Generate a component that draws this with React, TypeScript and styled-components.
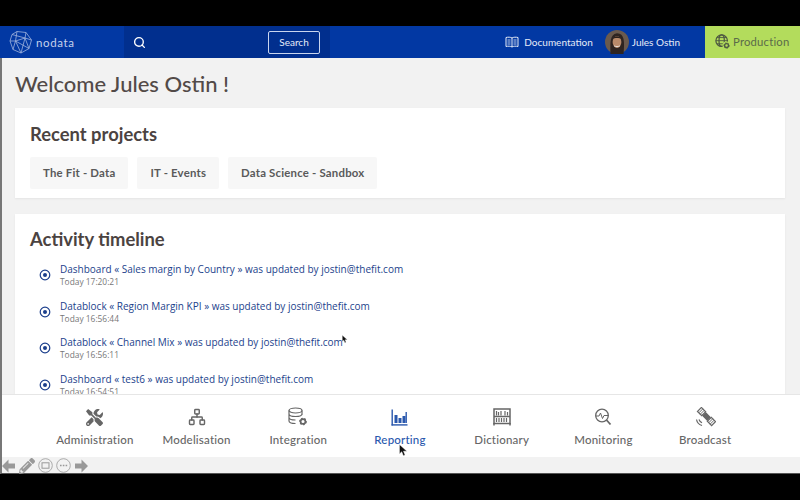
import React from "react";
import styled, { createGlobalStyle } from "styled-components";
import { Search, Network } from "lucide-react";
import { FaTools, FaPencilAlt } from "react-icons/fa";

const Global = createGlobalStyle`
  html, body { margin: 0; padding: 0; background: #000; }
  * { box-sizing: border-box; }
`;

const Frame = styled.div`
  position: relative;
  width: 800px;
  height: 500px;
  padding: 26px 0;
  background: #000;
  overflow: hidden;
  font-family: "Lato", "Noto Sans", sans-serif;
`;
const Screen = styled.div`
  height: 448px;
  display: flex;
  flex-direction: column;
  background: #f2f2f2;
  border-left: 2px solid #777;
`;
const Nav = styled.header`
  height: 32px;
  margin-left: -2px;
  flex: none;
  display: flex;
  align-items: stretch;
  background: #0238a3;
  color: #e6ecf8;
`;
const Brand = styled.div`
  width: 124px;
  display: flex;
  align-items: center;
  gap: 3px;
  padding-left: 9px;
  font-size: 11.5px;
  letter-spacing: 0.6px;
  color: #c5d2ec;
`;
const SearchZone = styled.div`
  width: 206px;
  display: flex;
  align-items: center;
  justify-content: space-between;
  padding: 0 10px 0 9px;
  background: #012f8e;
`;
const SearchButton = styled.div`
  width: 52px;
  height: 23px;
  display: flex;
  align-items: center;
  justify-content: center;
  border: 1px solid #c9d5ee;
  border-radius: 2px;
  font-size: 10px;
  color: #e6ecf8;
`;
const NavRight = styled.div`
  flex: 1;
  display: flex;
  align-items: center;
  justify-content: flex-end;
  padding-right: 25px;
  font-size: 10px;
`;
const NavLink = styled.span`
  display: flex;
  align-items: center;
  gap: 5px;
`;
const Avatar = styled.svg`
  width: 24px;
  height: 24px;
  margin: 0 3px 0 12px;
`;
const Env = styled.div`
  width: 95px;
  display: flex;
  align-items: center;
  gap: 2px;
  padding: 0 0 1px 10px;
  background: #b3dc5c;
  color: #5b6b4a;
  font-size: 11.3px;
  letter-spacing: 0.2px;
`;
const Main = styled.main`
  flex: 1;
  min-height: 0;
  overflow: hidden;
  padding: 0 15px 0 13px;
`;
const Welcome = styled.h1`
  margin: 0;
  height: 50px;
  display: flex;
  align-items: center;
  font-size: 22px;
  font-weight: 500;
  color: #524a48;
`;
const Card = styled.section`
  background: #fff;
  padding: 15px 15px 9px;
  margin-bottom: 16px;
  box-shadow: 0 1px 2px rgba(0, 0, 0, 0.06);
`;
const CardTitle = styled.h2`
  margin: 0 0 12px;
  font-size: 18.4px;
  line-height: 22px;
  font-weight: 700;
  color: #4b4341;
`;
const Chips = styled.div`
  display: flex;
  gap: 9px;
`;
const Chip = styled.div`
  height: 32px;
  padding: 0 13px 1px;
  display: flex;
  align-items: center;
  background: #f7f7f7;
  border-radius: 2px;
  font-size: 11.4px;
  font-weight: 700;
  letter-spacing: 0.2px;
  color: #5a5a5a;
`;
const Timeline = styled(Card)`
  padding-top: 14px;
  margin: 0;
  height: 400px;
`;
const TimelineTitle = styled(CardTitle)`
  margin-bottom: 7px;
`;
const Entry = styled.div`
  height: 36.6px;
  display: flex;
  align-items: center;
  gap: 9px;
  padding-left: 9px;
  font-family: "Open Sans", sans-serif;
`;
const Link = styled.div`
  font-size: 10px;
  line-height: 14px;
  color: #1c3f8c;
`;
const Time = styled.div`
  font-size: 8.4px;
  line-height: 12px;
  color: #777;
`;
const Dock = styled.nav`
  height: 63px;
  flex: none;
  display: grid;
  grid-template-columns: repeat(7, 1fr);
  padding: 0 44px 0 42px;
  background: #fff;
  border-top: 1px solid #e6e6e6;
`;
const DockItem = styled.div<{ $active?: boolean }>`
  display: flex;
  flex-direction: column;
  align-items: center;
  padding-top: 13px;
  gap: 7px;
  font-size: 11.5px;
  font-weight: 500;
  letter-spacing: 0.2px;
  color: ${(p) => (p.$active ? "#2a58ad" : "#666")};
`;
const IconBox = styled.span`
  height: 18px;
  display: flex;
  align-items: center;
`;
const Player = styled.div`
  height: 17px;
  flex: none;
  display: flex;
  align-items: center;
  gap: 3px;
  margin-left: -1px;
  padding-top: 1px;
  color: #999;
  border-bottom: 1px solid #555;
`;
const Cursor = styled.svg<{ $x: number; $y: number; $s: number }>`
  position: absolute;
  left: ${(p) => p.$x}px;
  top: ${(p) => p.$y}px;
  width: ${(p) => p.$s}px;
  height: ${(p) => p.$s * 1.4}px;
`;

const Logo = () => (
  <svg width="24" height="24" viewBox="0 0 24 24" fill="none" stroke="#9fb3dd" strokeWidth="0.8" strokeLinejoin="round">
    <path d="M8 1.5 17 2.5 22.5 10 20 18.5 12 23 4 19.5 1 11 3 4.5Z" />
    <path d="M8 1.5 6.5 11 16 8 17 2.5M1 11 6.5 11 12 23 16 8 22.5 10M3 4.5 16 8M6.5 11 4 19.5M16 8 20 18.5 6.5 11" />
  </svg>
);
const BookIcon = () => (
  <svg width="14" height="12" viewBox="0 0 14 12" fill="none" stroke="#e6ecf8" strokeWidth="1">
    <path d="M7 2C5.5 1 3 1 1 1.5V10.5C3 10 5.5 10 7 11 8.5 10 11 10 13 10.5V1.5C11 1 8.5 1 7 2ZM7 2V11" />
    <path d="M2.5 4H5.5M2.5 6H5.5M2.5 8H5.5M8.5 4H11.5M8.5 6H11.5M8.5 8H11.5" strokeWidth="0.8" />
  </svg>
);
const Portrait = () => (
  <Avatar viewBox="0 0 22 22">
    <circle cx="11" cy="11" r="11" fill="#6a5a4e" />
    <path d="M5 22C5 12 4 4 11 3c7 0 7 8 6 19Z" fill="#2e2420" />
    <ellipse cx="11" cy="11" rx="4" ry="5.5" fill="#b98a6a" />
    <path d="M7 8c2-3 6-3 8 0-2-1-6-1-8 0Z" fill="#2b201b" />
    <path d="M8.5 14.5c1.5 1 3.5 1 5 0" stroke="#eee" strokeWidth="0.8" fill="none" />
  </Avatar>
);
const GearBadge = ({ cx, cy, r, color }: { cx: number; cy: number; r: number; color: string }) => (
  <g>
    <circle cx={cx} cy={cy} r={r} fill="none" stroke={color} strokeWidth={r * 0.7} />
    <circle cx={cx} cy={cy} r={r * 1.35} fill="none" stroke={color} strokeWidth={r * 0.5} strokeDasharray={`${r * 0.7} ${r * 0.65}`} />
  </g>
);
const GlobeGear = () => (
  <svg width="16" height="16" viewBox="0 0 18 18" fill="none" stroke="#4f5a42" strokeWidth="1.4">
    <circle cx="7.5" cy="7.5" r="6.5" />
    <ellipse cx="7.5" cy="7.5" rx="3" ry="6.5" />
    <path d="M1 7.5H14M2 4H13M2 11H13" strokeWidth="1" />
    <circle cx="13" cy="13" r="4.6" fill="#b3dc5c" stroke="none" />
    <GearBadge cx={13} cy={13} r={2.2} color="#4f5a42" />
  </svg>
);
const DataGear = () => (
  <svg width="22" height="20" viewBox="0 0 22 20" fill="none" stroke="#666" strokeWidth="1.2">
    <ellipse cx="8.5" cy="3.5" rx="6.5" ry="2.5" />
    <path d="M2 3.5V14c0 1.4 3 2.5 6.5 2.5M15 3.5V8M2 7c0 1.4 3 2.5 6.5 2.5S15 8.4 15 7M2 10.5C2 11.9 5 13 8.5 13" />
    <GearBadge cx={16} cy={14.5} r={2.4} color="#666" />
  </svg>
);
const BarsIcon = () => (
  <svg width="17" height="17" viewBox="0 0 17 17" fill="#2a58ad">
    <rect x="0.5" y="0.5" width="1.4" height="16" />
    <rect x="0.5" y="15.2" width="16" height="1.4" />
    <rect x="3.5" y="6" width="3" height="8" />
    <rect x="7.5" y="9" width="3" height="5" />
    <rect x="11.5" y="7" width="3" height="7" />
    <rect x="14.5" y="3" width="1.4" height="11" />
  </svg>
);
const ShelfIcon = () => (
  <svg width="18" height="18" viewBox="0 0 18 18" fill="none" stroke="#666">
    <rect x="1" y="1" width="16" height="14.5" strokeWidth="1.5" />
    <path d="M1 8.5H17M1 17.5V15M17 17.5V15" strokeWidth="1.5" />
    <path d="M3.5 3V7.5M5.5 4V7.5M8 3V7.5M12 3V7.5M14.5 4V7.5M3.5 10V14M6 10V14M8.5 10V14M11 10V14M13.5 10V14" strokeWidth="1.2" />
  </svg>
);
const MonitorIcon = () => (
  <svg width="18" height="18" viewBox="0 0 18 18" fill="none" stroke="#666" strokeWidth="1.3">
    <circle cx="8" cy="7.5" r="6.3" />
    <path d="M12.5 12 16.5 16.5" strokeWidth="1.8" />
    <path d="M1.5 8H5L6.5 5 8.5 10.5 10 7.5H14.5" strokeWidth="1" />
  </svg>
);
const SatelliteIcon = () => (
  <svg width="21" height="21" viewBox="0 0 21 21" fill="none" stroke="#666" strokeWidth="1.2">
    <g transform="rotate(-45 11.5 9.5)">
      <rect x="9.5" y="6.5" width="4" height="6" fill="#666" />
      <rect x="8.7" y="-0.5" width="5.6" height="6" />
      <path d="M8.7 1.5H14.3M8.7 3.5H14.3" strokeWidth="0.9" />
      <rect x="8.7" y="13.5" width="5.6" height="6" />
      <path d="M8.7 15.5H14.3M8.7 17.5H14.3" strokeWidth="0.9" />
    </g>
    <path d="M1.5 12.5C2 15.5 4 17.5 7 18.5M4 12.5C4.5 14 5.5 15 7 15.8" />
  </svg>
);
const ArrowBtn = ({ flip }: { flip?: boolean }) => (
  <svg width="15" height="14" viewBox="0 0 15 14" fill="currentColor" style={flip ? { transform: "scaleX(-1)" } : undefined}>
    <path d="M7.5 0.5 1 7l6.5 6.5V9.5H14v-5H7.5Z" />
  </svg>
);
const RoundBtn = ({ dots }: { dots?: boolean }) => (
  <svg width="15" height="15" viewBox="0 0 15 15" fill="none" stroke="currentColor">
    <circle cx="7.5" cy="7.5" r="6.8" strokeWidth="0.8" />
    {dots ? (
      <path d="M4 7.5h1.6M6.8 7.5h1.6M9.6 7.5h1.6" strokeWidth="1.6" />
    ) : (
      <rect x="4" y="4.8" width="7" height="5.4" strokeWidth="1" />
    )}
  </svg>
);
const Dot = () => (
  <svg width="12" height="12" viewBox="0 0 12 12" fill="none" stroke="#1c3f8c">
    <circle cx="6" cy="6" r="4.8" strokeWidth="1.2" />
    <circle cx="6" cy="6" r="2" fill="#1c3f8c" stroke="none" />
  </svg>
);
const Pointer = ({ x, y, s }: { x: number; y: number; s: number }) => (
  <Cursor $x={x} $y={y} $s={s} viewBox="0 0 10 14">
    <path d="M0.5 0.5V11L3 8.6 4.8 13 6.8 12.2 5 8H8.8Z" fill="#111" stroke="#fff" strokeWidth="0.5" />
  </Cursor>
);

const entries = [
  ["Dashboard « Sales margin by Country » was updated by jostin@thefit.com", "Today 17:20:21"],
  ["Datablock « Region Margin KPI » was updated by jostin@thefit.com", "Today 16:56:44"],
  ["Datablock « Channel Mix » was updated by jostin@thefit.com", "Today 16:56:11"],
  ["Dashboard « test6 » was updated by jostin@thefit.com", "Today 16:54:51"],
];
const projects = ["The Fit - Data", "IT - Events", "Data Science - Sandbox"];
const dock: [string, React.ReactNode, boolean?][] = [
  ["Administration", <FaTools size={17} color="#666" />],
  ["Modelisation", <Network size={18} color="#666" strokeWidth={1.9} />],
  ["Integration", <DataGear />],
  ["Reporting", <BarsIcon />, true],
  ["Dictionary", <ShelfIcon />],
  ["Monitoring", <MonitorIcon />],
  ["Broadcast", <SatelliteIcon />],
];

export default function App() {
  return (
    <Frame>
      <Global />
      <Screen>
        <Nav>
          <Brand>
            <Logo />
            nodata
          </Brand>
          <SearchZone>
            <Search size={13} color="#fff" strokeWidth={2.5} />
            <SearchButton>Search</SearchButton>
          </SearchZone>
          <NavRight>
            <NavLink>
              <BookIcon />
              Documentation
            </NavLink>
            <Portrait />
            Jules Ostin
          </NavRight>
          <Env>
            <GlobeGear />
            Production
          </Env>
        </Nav>
        <Main>
          <Welcome>Welcome Jules Ostin !</Welcome>
          <Card>
            <CardTitle>Recent projects</CardTitle>
            <Chips>
              {projects.map((p) => (
                <Chip key={p}>{p}</Chip>
              ))}
            </Chips>
          </Card>
          <Timeline>
            <TimelineTitle>Activity timeline</TimelineTitle>
            {entries.map(([t, d]) => (
              <Entry key={d}>
                <Dot />
                <div>
                  <Link>{t}</Link>
                  <Time>{d}</Time>
                </div>
              </Entry>
            ))}
          </Timeline>
        </Main>
        <Dock>
          {dock.map(([label, icon, active]) => (
            <DockItem key={label} $active={active}>
              <IconBox>{icon}</IconBox>
              {label}
            </DockItem>
          ))}
        </Dock>
        <Player>
          <ArrowBtn />
          <FaPencilAlt size={16} />
          <RoundBtn />
          <RoundBtn dots />
          <ArrowBtn flip />
        </Player>
      </Screen>
      <Pointer x={342} y={335} s={6} />
      <Pointer x={399} y={444} s={9} />
    </Frame>
  );
}
